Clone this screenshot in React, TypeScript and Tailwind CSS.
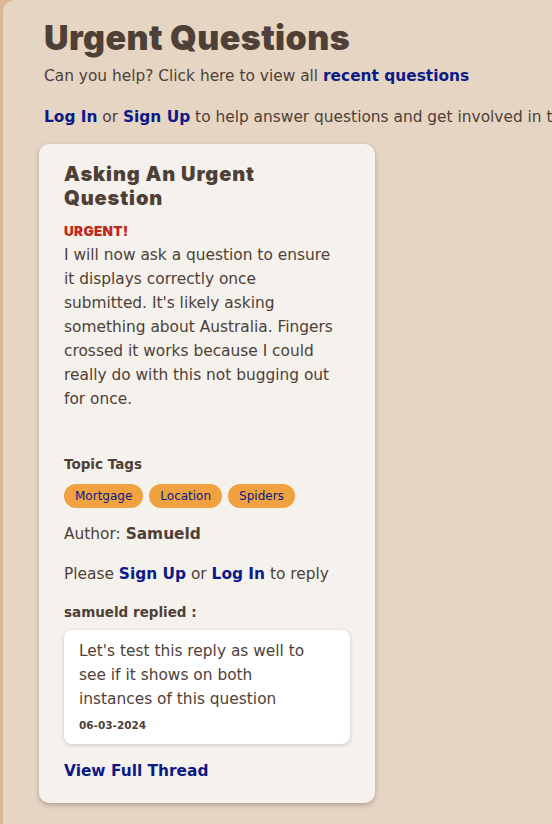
const body = { fontFamily: '"DejaVu Sans", "Open Sans", sans-serif' };
const heading = { fontFamily: 'Inter, "DejaVu Sans", sans-serif' };

const tags = ['Mortgage', 'Location', 'Spiders'];

const QuestionCard = () => {
  return (
    <div className="w-[336px] rounded-[10px] bg-[#f5f1ec] px-[25px] pt-[18px] pb-[20px] shadow-[0_2px_5px_rgba(0,0,0,0.25)]">
      <h2 style={heading} className="text-[20px] leading-[24px] font-black tracking-[0.9px] text-[#4e3f37]">
        Asking An Urgent Question
      </h2>
      <p style={heading} className="mt-[9px] text-[13.5px] leading-[24px] font-black tracking-wide text-[#c0281c]">URGENT!</p>
      <p className="max-w-[274px] text-[15.4px] leading-[24px] text-[#4e3f37]">
        I will now ask a question to ensure it displays correctly once submitted. It's likely asking something about Australia. Fingers crossed it works because I could really do with this not bugging out for once.
      </p>

      <p className="mt-[43px] text-[13.5px] font-bold text-[#4e3f37]">Topic Tags</p>
      <div className="mt-[10px] flex gap-[6px]">
        {tags.map((t) => (
          <span key={t} className="rounded-full bg-[#f0a241] px-[11px] h-[24px] flex items-center text-[12px] text-[#0b1a86]">
            {t}
          </span>
        ))}
      </div>

      <p className="mt-[14px] text-[15.4px] leading-[24px] text-[#4e3f37]">
        Author: <span className="font-bold">Samueld</span>
      </p>
      <p className="mt-[16px] text-[15.4px] leading-[24px] text-[#4e3f37]">
        Please <a className="font-bold text-[#0b1a86]">Sign Up</a> or <a className="font-bold text-[#0b1a86]">Log In</a> to reply
      </p>

      <p className="mt-[16px] text-[13.5px] font-bold text-[#4e3f37]">samueld replied :</p>
      <div className="mt-[7px] rounded-[8px] bg-white px-[15px] pt-[9px] pb-[11px] shadow-[0_1px_4px_rgba(0,0,0,0.18)]">
        <p className="max-w-[240px] text-[15.4px] leading-[24px] text-[#4e3f37]">
          Let's test this reply as well to see if it shows on both instances of this question
        </p>
        <p className="mt-[7px] text-[10.5px] font-bold text-[#4e3f37]">06-03-2024</p>
      </div>

      <a className="mt-[16px] block text-[15.4px] font-bold text-[#0b1a86]">View Full Thread</a>
    </div>
  );
};

export default function App() {
  return (
    <div style={body} className="min-h-screen w-[552px] overflow-hidden bg-[#dcb797]">
      <div className="ml-[3px] min-h-screen rounded-tl-[12px] bg-[#e6d5c3] pl-[36px] pt-[18px] pb-[22px]">
        <h1 style={heading} className="pl-[5px] text-[34px] leading-[40px] font-black tracking-[0.4px] text-[#4e3f37]">
          Urgent Questions
        </h1>
        <p className="mt-[6px] pl-[5px] whitespace-nowrap text-[15.4px] leading-[24px] text-[#4e3f37]">
          Can you help? Click here to view all <a className="font-bold text-[#0b1a86]">recent questions</a>
        </p>
        <p className="mt-[17px] pl-[5px] whitespace-nowrap text-[15.4px] leading-[24px] text-[#4e3f37]">
          <a className="font-bold text-[#0b1a86]">Log In</a> or <a className="font-bold text-[#0b1a86]">Sign Up</a> to help answer questions and get involved in the community
        </p>
        <div className="mt-[15px]">
          <QuestionCard />
        </div>
      </div>
    </div>
  );
}
